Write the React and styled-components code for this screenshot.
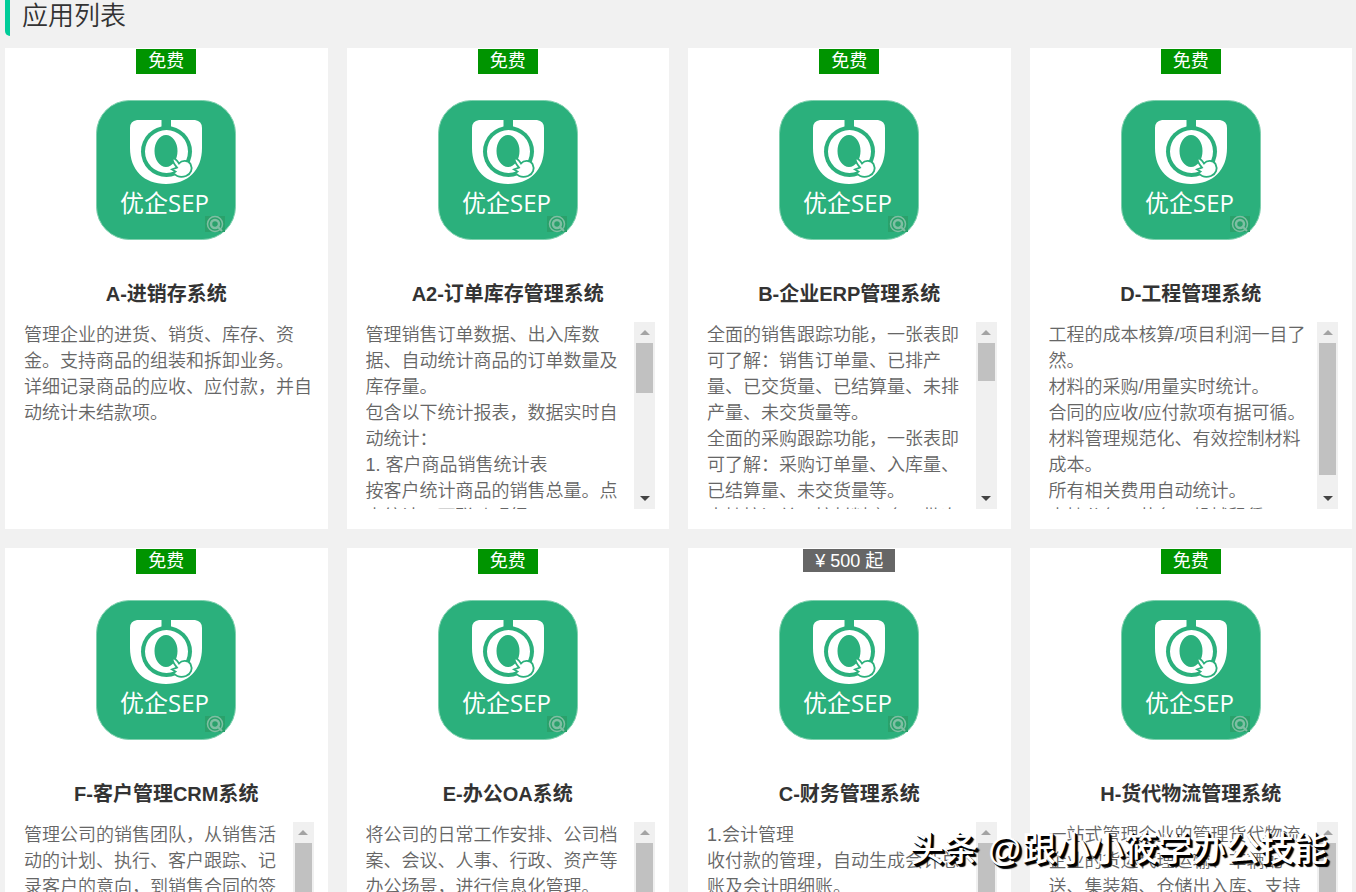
import React, { useRef } from 'react';
import styled, { createGlobalStyle } from 'styled-components';

const GlobalStyle = createGlobalStyle`
    * {
        box-sizing: border-box;
    }
    body {
        margin: 0;
        background: #f1f1f1;
        color: #333333;
        font-family: "Liberation Sans", "Noto Sans CJK SC", sans-serif;
    }
    #root {
        position: relative;
    }
`;

const Page = styled.main`
    padding: 0 4px 19px 5px;
`;

const PageTitle = styled.h1`
    margin: 0 0 12px;
    padding: 0 0 4px 12px;
    border-left: 5px solid #00cc99;
    border-bottom-left-radius: 5px;
    font-size: 26px;
    line-height: 32px;
    font-weight: 350;
`;

const CardGrid = styled.div`
    display: grid;
    grid-template-columns: repeat(4, minmax(0, 1fr));
    gap: 19px;
`;

const Card = styled.article`
    display: flex;
    flex-direction: column;
    align-items: center;
    padding: 1px 14px 20px 19px;
    background: #ffffff;
`;

const BadgeSlot = styled.div`
    height: 51px;
    margin-left: -5px;
`;

const Badge = styled.div`
    padding: 0 12px;
    height: ${(props) => (props.$paid ? '23px' : '25px')};
    line-height: ${(props) => (props.$paid ? '24px' : '25px')};
    font-size: 18px;
    color: #ffffff;
    background: ${(props) => (props.$paid ? '#666666' : '#009400')};
`;

const LogoImage = styled.svg`
    display: block;
    width: 140px;
    height: 140px;
    margin-left: -5px;
`;

const CardTitle = styled.h2`
    margin: 40px 0 14px -5px;
    font-size: 20px;
    line-height: 28px;
    font-weight: 700;
`;

const Body = styled.div`
    display: flex;
    align-self: stretch;
    height: 187px;
`;

const Description = styled.div`
    flex: 1;
    min-width: 0;
    overflow-y: auto;
    scrollbar-width: none;
    white-space: pre-line;
    font-size: 18px;
    line-height: 26px;
    font-weight: 350;
    color: #666666;
`;

const Track = styled.div`
    display: flex;
    flex-direction: column;
    flex: 0 0 21px;
    background: #f0f0f0;
`;

const ArrowButton = styled.button`
    display: flex;
    align-items: center;
    justify-content: center;
    height: 21px;
    padding: 0;
    border: 0;
    background: none;
    color: ${(props) => (props.$active ? '#444444' : '#a3a3a3')};
`;

const ThumbArea = styled.div`
    flex: 1;
    padding: 0 2px;
`;

const Thumb = styled.div`
    background: #c1c1c1;
`;

const Watermark = styled.div`
    position: absolute;
    right: 28px;
    top: 824px;
    font-size: 34px;
    line-height: 50px;
    font-weight: 500;
    color: #ffffff;
    text-shadow: 1px 1px 0 #000000, 2px 2px 0 #000000, 3px 3px 1px #000000;
    white-space: nowrap;
    pointer-events: none;
`;

const apps = [
    {
        name: 'A-进销存系统',
        text: '管理企业的进货、销货、库存、资金。支持商品的组装和拆卸业务。\n详细记录商品的应收、应付款，并自动统计未结款项。'
    },
    {
        name: 'A2-订单库存管理系统',
        thumb: 50,
        text: '管理销售订单数据、出入库数据、自动统计商品的订单数量及库存量。\n包含以下统计报表，数据实时自动统计：\n1. 客户商品销售统计表\n按客户统计商品的销售总量。点击统计，可联动明细'
    },
    {
        name: 'B-企业ERP管理系统',
        thumb: 38,
        text: '全面的销售跟踪功能，一张表即可了解：销售订单量、已排产量、已交货量、已结算量、未排产量、未交货量等。\n全面的采购跟踪功能，一张表即可了解：采购订单量、入库量、已结算量、未交货量等。\n支持按订单、按材料齐套、批次备料'
    },
    {
        name: 'D-工程管理系统',
        thumb: 132,
        text: '工程的成本核算/项目利润一目了然。\n材料的采购/用量实时统计。\n合同的应收/应付款项有据可循。\n材料管理规范化、有效控制材料成本。\n所有相关费用自动统计。\n支持分包、劳务、机械租赁'
    },
    {
        name: 'F-客户管理CRM系统',
        thumb: 100,
        text: '管理公司的销售团队，从销售活动的计划、执行、客户跟踪、记录客户的意向，到销售合同的签'
    },
    {
        name: 'E-办公OA系统',
        thumb: 100,
        text: '将公司的日常工作安排、公司档案、会议、人事、行政、资产等办公场景，进行信息化管理。'
    },
    {
        name: 'C-财务管理系统',
        thumb: 100,
        price: '¥ 500 起',
        text: '1.会计管理\n收付款的管理，自动生成会计总账及会计明细账。'
    },
    {
        name: 'H-货代物流管理系统',
        thumb: 100,
        text: '一站式管理企业的管理货代物流企业的货运代理运输、车辆配送、集装箱、仓储出入库、支持'
    }
];

const Logo = () => (
    <LogoImage viewBox="0 0 140 140" role="img" aria-label="优企SEP">
        <rect x="0.5" y="0.5" width="139" height="139" rx="33" fill="#2bb07c" stroke="#7fd0ae" />
        <path
            d="M41 20H65.500V28H75V20H99Q106 21 106 28V48C106 70 92 84 70 84S34 70 34 48V28Q34 21 41 20Z"
            fill="#ffffff"
        />
        <circle cx="70.5" cy="51.5" r="25.5" fill="#2bb07c" />
        <path
            fillRule="evenodd"
            d="M70.500 30A21.500 21.500 0 1 0 70.500 73A21.500 21.500 0 1 0 70.500 30ZM70 35A11.500 16 0 1 1 70 67A11.500 16 0 1 1 70 35Z"
            fill="#ffffff"
        />
        <path
            d="M76.500 58.500C79 58 81 60.500 83 63.500C86 60 92 60 94.500 64C97 69 95 74 90 76C86 77.500 81 77 77.500 73L79.500 71.500L76 69.500L81 67.500C79 65 76.500 62.500 76.500 58.500Z"
            fill="#ffffff"
            stroke="#2bb07c"
            strokeWidth="1.8"
        />
        <text x="24" y="112" fontSize="24" fill="#ffffff" fontFamily="Noto Sans CJK SC, sans-serif">
            优企
            <tspan fontFamily="Open Sans, Noto Sans, sans-serif">SEP</tspan>
        </text>
        <rect x="109" y="116" width="20" height="16" fill="#2aa16b" />
        <g fill="none" stroke="#7fbfa3">
            <circle cx="119" cy="124" r="7.500" strokeWidth="1.500" />
            <circle cx="119" cy="124" r="4" strokeWidth="2.5" />
            <path d="M121 126L126 131" strokeWidth="2" />
        </g>
    </LogoImage>
);

const Arrow = ({ down }) => (
    <svg width="10" height="5" viewBox="0 0 10 5" aria-hidden="true">
        <path d={down ? 'M0 0H10L5 5Z' : 'M0 5L5 0L10 5Z'} fill="currentColor" />
    </svg>
);

const AppCard = ({ app }) => {
    const textRef = useRef(null);

    const scroll = (amount) => {
        textRef.current.scrollBy({ top: amount });
    };

    return (
        <Card>
            <BadgeSlot>
                <Badge $paid={Boolean(app.price)}>{app.price || '免费'}</Badge>
            </BadgeSlot>
            <Logo />
            <CardTitle>{app.name}</CardTitle>
            <Body>
                <Description ref={textRef}>{app.text}</Description>
                {app.thumb && (
                    <Track>
                        <ArrowButton type="button" aria-label="向上滚动" onClick={() => scroll(-26)}>
                            <Arrow />
                        </ArrowButton>
                        <ThumbArea>
                            <Thumb style={{ height: app.thumb }} />
                        </ThumbArea>
                        <ArrowButton $active type="button" aria-label="向下滚动" onClick={() => scroll(26)}>
                            <Arrow down />
                        </ArrowButton>
                    </Track>
                )}
            </Body>
        </Card>
    );
};

const App = () => {
    return (
        <>
            <GlobalStyle />
            <Page>
                <PageTitle>应用列表</PageTitle>
                <CardGrid>
                    {apps.map((app) => (
                        <AppCard key={app.name} app={app} />
                    ))}
                </CardGrid>
            </Page>
            <Watermark>头条 @跟小小筱学办公技能</Watermark>
        </>
    );
};

export default App;
